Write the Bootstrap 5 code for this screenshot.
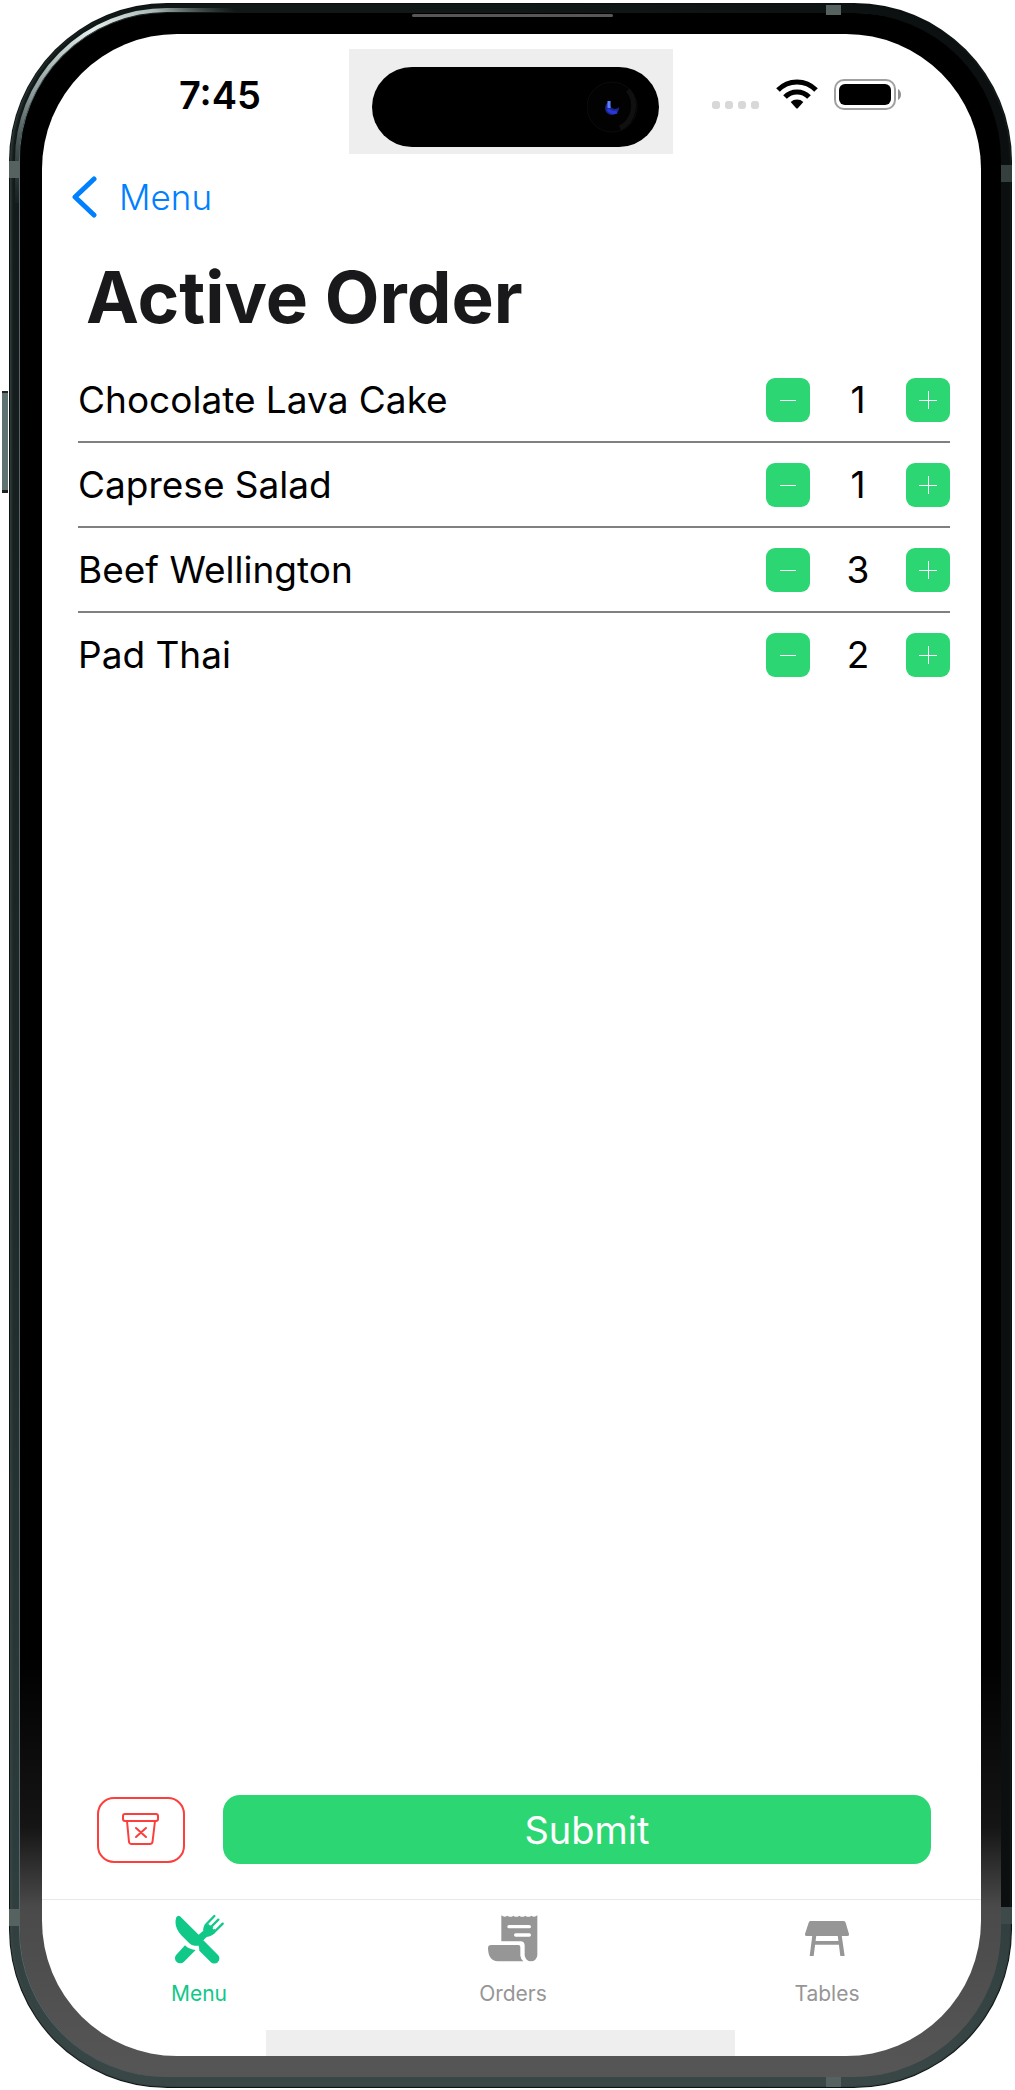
<!DOCTYPE html>
<html lang="en">
<head>
<meta charset="utf-8">
<meta name="viewport" content="width=device-width, initial-scale=1">
<title>Active Order</title>
<link href="https://cdn.jsdelivr.net/npm/bootstrap@5.3.0/dist/css/bootstrap.min.css" rel="stylesheet">
<style>
  :root { --green: #2bd673; --tab-green: #10c888; --tab-gray: #969696; }
  body { font-family: Inter, "Liberation Sans", sans-serif; font-size: 37px; line-height: 44px; color: #000; background: #fff; }
  svg { display: block; }

  /* device: metal band, glass bezel, screen */
  .page-wrap { padding: 3px 3px 2px 9px; min-height: 100vh; }
  .device { padding: 10px 11px 11px; border-radius: 158px;
    background:
      linear-gradient(to right, transparent 50%, #0b0f0f 98%) top / 100% 92% no-repeat,
      linear-gradient(to bottom, #101817 0, #1c2726 50%, #2c3b3b 88%, #3a4747 100%);
    box-shadow: inset 0 0 1px 1px #0a0f0f, inset 4px 0 3px -2px #43504f, inset -2px 0 2px -1px #3c4343; }
  .bezel { padding: 21px 20px 21px 22px; border-radius: 147px;
    background: linear-gradient(to bottom, #000 0, #000 calc(100% - 420px), #151515 calc(100% - 250px), #4a4a4a calc(100% - 170px), #565656 100%);
    box-shadow: -1px 0 0 #55676a; }
  .screen { background: #fff; border-radius: 135px; overflow: hidden; }
  .shine { top: 0; left: 0; }
  .side-key { left: -7px; top: 388px; width: 6px; height: 102px; background: #5f7373; border-top: 2px solid #222; border-bottom: 3px solid #222; }
  .speaker { left: 403px; top: 11px; width: 201px; height: 3px; background: #5a5657; border-radius: 2px; }
  .band-v { width: 11px; height: 17px; background: #56625f; }
  .band-h { width: 15px; height: 10px; background: #56625f; }
  .band-lt { left: 0; top: 158px; } .band-rt { right: 0; top: 162px; background: #343f3e; }
  .band-lb { left: 0; bottom: 162px; } .band-rb { right: 0; bottom: 164px; background: #3e4a4a; }
  .band-t { right: 171px; top: 2px; } .band-b { right: 171px; bottom: 1px; }

  /* status bar */
  .status-bar { padding: 15px 2px 0 0; display: grid; grid-template-columns: 1fr 324px 1fr; }
  .clock { font-size: 38px; font-weight: 600; padding: 24px 0 0 137px; }
  .island-plate { height: 105px; background: #eee; padding-top: 18px; }
  .island { width: 287px; height: 80px; border-radius: 40px; background: #000; margin-left: 23px; }
  .indicators { padding: 30px 76px 0 0; }
  .signal { gap: 5px; margin: 22px 17px 0 0; }
  .signal i { width: 8px; height: 8px; border-radius: 3px; background: #d8d8d8; }

  /* heading */
  .back-link { color: #007fff; font-size: 35px; font-weight: 300; padding: 21px 0 0 30px; gap: 22px; }
  .back-link:hover { color: #0067d0; }
  .order-title { font-size: 71px; line-height: 84px; font-weight: 700; color: #19191b; padding: 36px 0 0 44px; margin: 0 0 19px; }

  /* order lines */
  .order-list { margin: 0 31px 0 36px; }
  .order-item { height: 85px; border-bottom: 2px solid #808080; }
  .order-item:last-child { border-bottom-color: transparent; }
  .step-btn { width: 44px; height: 44px; border-radius: 9px; background: var(--green); padding: 0; }
  .step-btn:hover { background: #25bd65; }
  .step-btn svg { margin: auto; }
  .qty { width: 96px; text-align: center; }

  /* actions */
  .actions { padding: 0 50px 35px 55px; gap: 38px; }
  .discard-btn { width: 88px; height: 66px; border: 2px solid #fc3e3c; border-radius: 17px; padding: 0; background: #fff; }
  .discard-btn svg { margin: auto; }
  .submit-btn, .submit-btn:hover { height: 69px; border-radius: 17px; background: var(--green); color: #fff; font-size: 38px; line-height: 44px; padding: 0 0 0 20px; }

  /* tab bar */
  .tabs { border-top: 1px solid #e8e8e8; padding: 14px 0 22px; margin-right: -3px; }
  .tab-item { color: var(--tab-gray); font-size: 21px; line-height: 28px; padding: 0; gap: 16px; }
  .tab-item:hover { color: #777; }
  .tab-item.active, .tab-item.active:hover { color: var(--tab-green); }
  .home-area { width: 469px; height: 26px; background: #eee; margin-left: 224px; }
</style>
</head>
<body>
<div class="page-wrap d-flex">
  <div class="device position-relative d-flex flex-grow-1">
    <div class="bezel d-flex flex-grow-1">
      <div class="screen d-flex flex-column flex-grow-1">

        <header class="status-bar">
          <div class="clock">7:45</div>
          <div class="island-plate">
            <div class="island d-flex justify-content-end">
              <svg width="72" height="80" viewBox="0 0 72 80" aria-hidden="true">
                <circle cx="25" cy="40" r="25" fill="#020202" stroke="#0c0c0c"/>
                <path d="M41 23a25 25 0 0 1-8 38" fill="none" stroke="#101010" stroke-width="5"/>
                <circle cx="25" cy="41" r="7" fill="#1c2590"/>
                <circle cx="28" cy="37" r="5" fill="#000"/>
                <path d="M22 34v7" stroke="#5a84ff" stroke-width="3"/>
                <path d="M21 42q3 5 9 3" fill="none" stroke="#2638d8" stroke-width="3"/>
              </svg>
            </div>
          </div>
          <div class="indicators d-flex justify-content-end">
            <div class="signal d-flex"><i></i><i></i><i></i><i></i></div>
            <svg class="me-3" width="42" height="30" viewBox="0 0 126 90" role="img" aria-label="Wi-Fi">
              <path d="M6 33A79 79 0 0 1 120 33M27 54A50 50 0 0 1 99 54" fill="none" stroke="#000" stroke-width="15"/>
              <path d="M44 69A28 28 0 0 1 82 69L66 87Q63 90 60 87Z"/>
            </svg>
            <svg width="69" height="31" viewBox="0 0 69 31" role="img" aria-label="Battery full">
              <rect x="1" y="1" width="60" height="29" rx="9" fill="#fff" stroke="#a0a0a0" stroke-width="2"/>
              <rect x="5" y="5" width="52" height="21" rx="6"/>
              <path d="M64 10q3 2 3 5.500t-3 5.500z" fill="#909090"/>
            </svg>
          </div>
        </header>

        <nav class="d-flex">
          <a href="#" class="back-link d-flex align-items-center text-decoration-none">
            <svg width="25" height="42" viewBox="0 0 25 42" aria-hidden="true"><path d="M22 3L3 21L22 39" fill="none" stroke="#007fff" stroke-width="5" stroke-linecap="round" stroke-linejoin="round"/></svg>
            <span>Menu</span>
          </a>
        </nav>

        <main class="d-flex flex-column flex-grow-1">
          <h1 class="order-title">Active Order</h1>
          <ul class="order-list list-unstyled">
            <li class="order-item d-flex align-items-center">
              <span class="flex-grow-1">Chocolate Lava Cake</span>
              <button type="button" class="btn border-0 step-btn" aria-label="Remove one Chocolate Lava Cake"><svg width="18" height="18"><path d="M1 9.500H17" stroke="#fff"/></svg></button>
              <output class="qty">1</output>
              <button type="button" class="btn border-0 step-btn" aria-label="Add one Chocolate Lava Cake"><svg width="18" height="18"><path d="M0 9.500H18M9.500 0V18" stroke="#fff"/></svg></button>
            </li>
            <li class="order-item d-flex align-items-center">
              <span class="flex-grow-1">Caprese Salad</span>
              <button type="button" class="btn border-0 step-btn" aria-label="Remove one Caprese Salad"><svg width="18" height="18"><path d="M1 9.500H17" stroke="#fff"/></svg></button>
              <output class="qty">1</output>
              <button type="button" class="btn border-0 step-btn" aria-label="Add one Caprese Salad"><svg width="18" height="18"><path d="M0 9.500H18M9.500 0V18" stroke="#fff"/></svg></button>
            </li>
            <li class="order-item d-flex align-items-center">
              <span class="flex-grow-1">Beef Wellington</span>
              <button type="button" class="btn border-0 step-btn" aria-label="Remove one Beef Wellington"><svg width="18" height="18"><path d="M1 9.500H17" stroke="#fff"/></svg></button>
              <output class="qty">3</output>
              <button type="button" class="btn border-0 step-btn" aria-label="Add one Beef Wellington"><svg width="18" height="18"><path d="M0 9.500H18M9.500 0V18" stroke="#fff"/></svg></button>
            </li>
            <li class="order-item d-flex align-items-center">
              <span class="flex-grow-1">Pad Thai</span>
              <button type="button" class="btn border-0 step-btn" aria-label="Remove one Pad Thai"><svg width="18" height="18"><path d="M1 9.500H17" stroke="#fff"/></svg></button>
              <output class="qty">2</output>
              <button type="button" class="btn border-0 step-btn" aria-label="Add one Pad Thai"><svg width="18" height="18"><path d="M0 9.500H18M9.500 0V18" stroke="#fff"/></svg></button>
            </li>
          </ul>
          <div class="actions d-flex align-items-center mt-auto">
            <button type="button" class="btn discard-btn" aria-label="Discard order">
              <svg width="38" height="34" viewBox="0 0 38 34" fill="none" stroke="#fc3e3c" stroke-width="2" stroke-linejoin="round" stroke-linecap="round">
                <rect x="1" y="1" width="35" height="7" rx="2"/>
                <path d="M5 8L7 29Q7.500 31 9 31H28Q30 31 30.500 29L33 8M14 15L24 24M24 15L14 24"/>
              </svg>
            </button>
            <button type="submit" class="btn border-0 submit-btn flex-grow-1">Submit</button>
          </div>
        </main>

        <nav class="tabs nav nav-justified" aria-label="Sections">
          <a href="#" class="tab-item nav-item active d-flex flex-column align-items-center text-decoration-none" aria-current="page">
            <svg width="50" height="50" viewBox="0 0 150 150" fill="currentColor" aria-hidden="true">
              <path d="M18 7Q12 2 7 10C0 30 8 48 22 64L46 88Q54 96 64 95L74 95Q76 103 76 110L110 144A15 15 0 0 0 132 123L88 79L98 69Q112 68 121 58L123 45L105 30L92 33Q86 42 88 50L74 62Z"/>
              <path d="M33 94Q46 107 65 108L30 143A15 15 0 0 1 7 122Z"/>
              <path d="M121 6L95 33M133 17L108 42M146 29L118 57" stroke="currentColor" stroke-width="7" stroke-linecap="round"/>
              <path d="M127 11L108 31M138 23L119 43" stroke="#fff" stroke-width="6" stroke-linecap="round"/>
            </svg>
            <span>Menu</span>
          </a>
          <a href="#" class="tab-item nav-item d-flex flex-column align-items-center text-decoration-none">
            <svg width="52" height="50" viewBox="0 0 156 150" fill="currentColor" aria-hidden="true">
              <path d="M43 4q9 8 18 1q9 7 18 0q9 7 18 0q9 7 18 0q9 7 18 0q9 7 18-1V123a19 19 0 0 1-38 0V94Q112 82 101 82H43Z"/>
              <path d="M12 93H94Q100 93 100 99V125Q101 134 109 142H32Q4 141 3 103Q3 93 12 93Z"/>
              <path d="M66 38H127M86 63H127" stroke="#fff" stroke-width="10" stroke-linecap="round"/>
            </svg>
            <span>Orders</span>
          </a>
          <a href="#" class="tab-item nav-item d-flex flex-column align-items-center text-decoration-none">
            <svg width="44" height="50" viewBox="0 0 132 150" fill="currentColor" aria-hidden="true">
              <path d="M16 21H116Q121 21 122 26L132 60Q133 66 127 66H5Q-1 66 0 60L11 26Q12 21 16 21Z"/>
              <path d="M22 64H34L26 126H14ZM98 64H110L119 126H106ZM30 81H102V92H30Z"/>
            </svg>
            <span>Tables</span>
          </a>
        </nav>
        <div class="home-area"></div>
      </div>
    </div>

    <svg class="shine position-absolute" width="420" height="420" viewBox="0 0 420 420" fill="none" aria-hidden="true">
      <defs><linearGradient id="gleam" gradientUnits="userSpaceOnUse" x1="0" y1="200" x2="220" y2="0">
        <stop offset="0" stop-color="#5c6c6b" stop-opacity="0"/><stop offset=".3" stop-color="#8b9b99"/><stop offset=".6" stop-color="#e6efec"/><stop offset=".8" stop-color="#a9b8b5"/><stop offset="1" stop-color="#5c6c6b" stop-opacity="0"/>
      </linearGradient></defs>
      <path d="M8 200V158A150 150 0 0 1 158 7H300" stroke="url(#gleam)" stroke-width="4"/>
    </svg>
    <div class="side-key position-absolute"></div>
    <div class="speaker position-absolute"></div>
    <div class="band-v band-lt position-absolute"></div>
    <div class="band-v band-rt position-absolute"></div>
    <div class="band-v band-lb position-absolute"></div>
    <div class="band-v band-rb position-absolute"></div>
    <div class="band-h band-t position-absolute"></div>
    <div class="band-h band-b position-absolute"></div>
  </div>
</div>
<script src="https://cdn.jsdelivr.net/npm/bootstrap@5.3.0/dist/js/bootstrap.bundle.min.js"></script>
</body>
</html>
